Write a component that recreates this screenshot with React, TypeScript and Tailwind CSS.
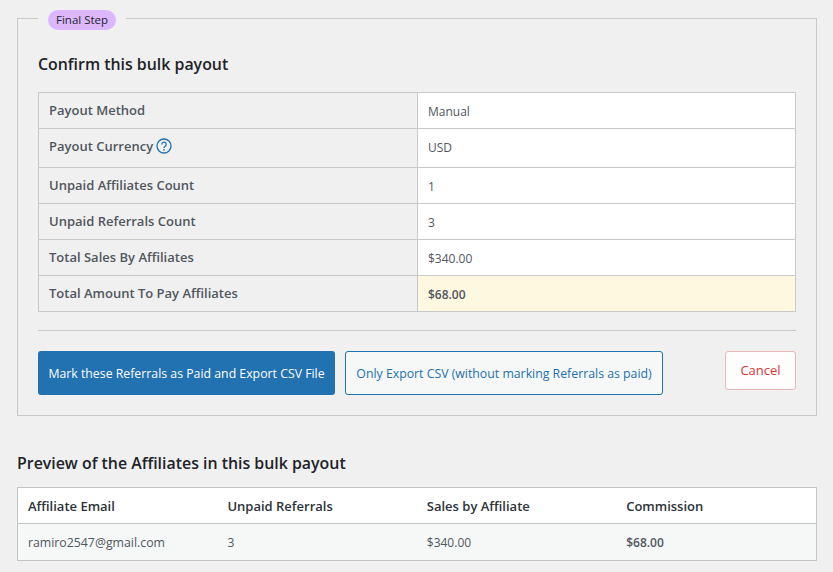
const font = "[font-family:'Open_Sans','Noto_Sans',sans-serif]";

const rows = [
  { label: "Payout Method", value: "Manual" },
  { label: "Payout Currency", value: "USD", help: true },
  { label: "Unpaid Affiliates Count", value: "1" },
  { label: "Unpaid Referrals Count", value: "3" },
  { label: "Total Sales By Affiliates", value: "$340.00" },
  { label: "Total Amount To Pay Affiliates", value: "$68.00", highlight: true },
];

function HelpIcon() {
  return (
    <svg width="16" height="16" viewBox="0 0 16 16" fill="none" className="ml-[3px] mt-[2px] shrink-0">
      <circle cx="8" cy="8" r="7" stroke="#2271b1" strokeWidth="1.3" />
      <path d="M5.8 6.4a2.2 2.2 0 1 1 3.4 1.8c-.8.5-1.2.9-1.2 1.7" stroke="#2271b1" strokeWidth="1.3" />
      <circle cx="8" cy="11.8" r=".85" fill="#2271b1" />
    </svg>
  );
}

export default function App() {
  return (
    <main className={`h-[572px] w-[833px] overflow-hidden bg-[#f0f0f1] pt-[10px] pr-4 pl-[17px] text-[#50575e] ${font}`}>
      <fieldset className="h-[406px] border border-[#c9c9c9] px-5 pb-5">
        <legend className="h-4 px-[10px]">
          <span className="flex h-5 items-center rounded-full bg-[#dcb7ff] px-2 text-[11.5px] leading-none text-[#1d2327]">Final Step</span>
        </legend>
        <h2 className="mt-[27px] text-[15.9px] leading-[22px] font-semibold text-[#1d2327]">Confirm this bulk payout</h2>
        <div className="mt-[17px] border border-[#c9c9c9]">
          {rows.map((row, i) => (
            <div
              key={row.label}
              className={`flex ${row.help ? "h-[39px]" : i === 0 ? "h-[35px]" : "h-9"} ${i > 0 ? "border-t border-[#c9c9c9]" : ""}`}
            >
              <div className="flex w-[378px] shrink-0 px-[10px] pt-[7px] text-[13px] leading-[20px] font-semibold">
                {row.label}
                {row.help && <HelpIcon />}
              </div>
              <div
                className={`flex-1 border-l border-[#c9c9c9] px-[10px] pt-[9px] text-xs leading-[20px] ${
                  row.highlight ? "bg-[#fff8e1] font-semibold" : "bg-white"
                }`}
              >
                {row.value}
              </div>
            </div>
          ))}
        </div>
        <div className="mt-[18px] border-t border-[#c9c9c9]" />
        <div className="mt-5 flex items-start">
          <button className="h-11 w-[297px] rounded-[3px] bg-[#2271b1] pt-[2px] text-[12.3px] whitespace-nowrap text-white">
            Mark these Referrals as Paid and Export CSV File
          </button>
          <button className="ml-[10px] h-11 w-[318px] rounded-[3px] border border-[#2271b1] bg-[#f6f7f7] pt-[2px] text-[12.3px] whitespace-nowrap text-[#2271b1]">
            Only Export CSV (without marking Referrals as paid)
          </button>
          <button className="ml-auto h-[39px] w-[71px] rounded-[3px] border border-[#e6b8b8] bg-[#fffdfd] text-[13px] text-[#d63638]">
            Cancel
          </button>
        </div>
      </fieldset>
      <h2 className="mt-[35px] text-[15.9px] leading-[24px] font-semibold text-[#1d2327]">Preview of the Affiliates in this bulk payout</h2>
      <div className="mt-[12px] border border-[#c3c4c7]">
        <div className="grid h-[36px] grid-cols-[199.4px_199.4px_199.4px_1fr] items-center border-b border-[#c3c4c7] bg-white px-[10px] pt-[2px] text-[13px] font-semibold text-[#2c3338]">
          <span>Affiliate Email</span>
          <span>Unpaid Referrals</span>
          <span>Sales by Affiliate</span>
          <span>Commission</span>
        </div>
        <div className="grid h-[36px] grid-cols-[199.4px_199.4px_199.4px_1fr] items-center bg-[#f6f7f7] px-[10px] pt-[2px] text-xs">
          <span className="text-[12.3px]">ramiro2547@gmail.com</span>
          <span>3</span>
          <span>$340.00</span>
          <span className="font-semibold">$68.00</span>
        </div>
      </div>
    </main>
  );
}
